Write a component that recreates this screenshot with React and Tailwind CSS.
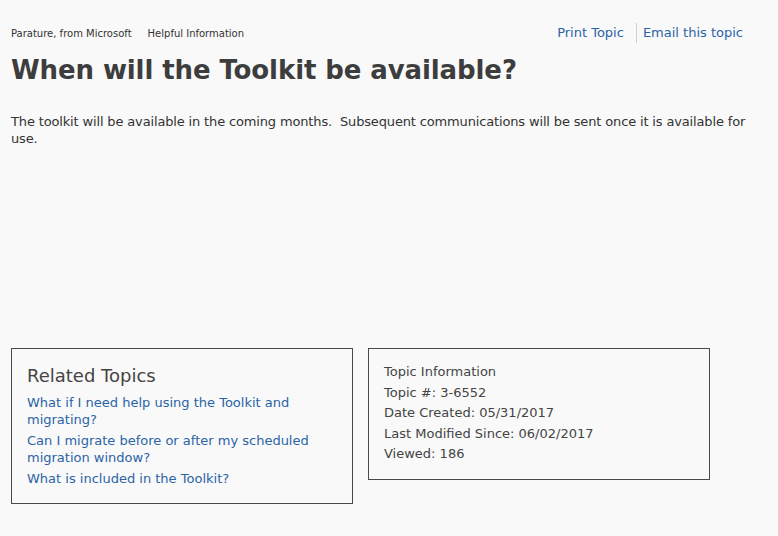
export default function App() {
  const related = [
    "What if I need help using the Toolkit and migrating?",
    "Can I migrate before or after my scheduled migration window?",
    "What is included in the Toolkit?",
  ];

  return (
    <div className="w-[778px] h-[536px] overflow-hidden bg-[#f9f9f9] px-[11px] font-['DejaVu_Sans',sans-serif] text-[#333]">
      {/* top bar */}
      <div className="flex justify-between items-center pt-[23px] h-[43px]">
        <div className="flex gap-[16px] text-[10px] text-[#333]">
          <span>Parature, from Microsoft</span>
          <span>Helpful Information</span>
        </div>
        <div className="flex items-center text-[13px] text-[#2b63a6] mr-[24px]">
          <a className="pr-[12px]">Print Topic</a>
          <span className="w-px h-[20px] bg-[#c9d3de]" />
          <a className="pl-[6px]">Email this topic</a>
        </div>
      </div>

      <h1 className="mt-[10px] text-[26px] leading-[34px] font-bold text-[#3d3d3d] tracking-[-0.1px]">
        When will the Toolkit be available?
      </h1>

      <p className="mt-[26px] w-[756px] text-[13px] leading-[17px] tracking-[-0.15px]">
        The toolkit will be available in the coming months.&nbsp; Subsequent communications will be sent once it is available for use.
      </p>

      {/* boxes */}
      <div className="flex items-start gap-[15px] mt-[201px]">
        <div className="w-[342px] h-[156px] border border-[#4a4a4a] pt-[15px] px-[15px]">
          <h2 className="text-[18px] leading-[24px] text-[#444]">Related Topics</h2>
          <ul className="mt-[6px] flex flex-col gap-[4px] text-[13px] leading-[17px] text-[#2b63a6]">
            {related.map((t) => (
              <li key={t}>
                <a>{t}</a>
              </li>
            ))}
          </ul>
        </div>
        <div className="w-[342px] h-[132px] border border-[#4a4a4a] pt-[13px] px-[15px] text-[13px] leading-[20.5px] text-[#444]">
          <div>Topic Information</div>
          <div>Topic #: 3-6552</div>
          <div>Date Created: 05/31/2017</div>
          <div>Last Modified Since: 06/02/2017</div>
          <div>Viewed: 186</div>
        </div>
      </div>
    </div>
  );
}
